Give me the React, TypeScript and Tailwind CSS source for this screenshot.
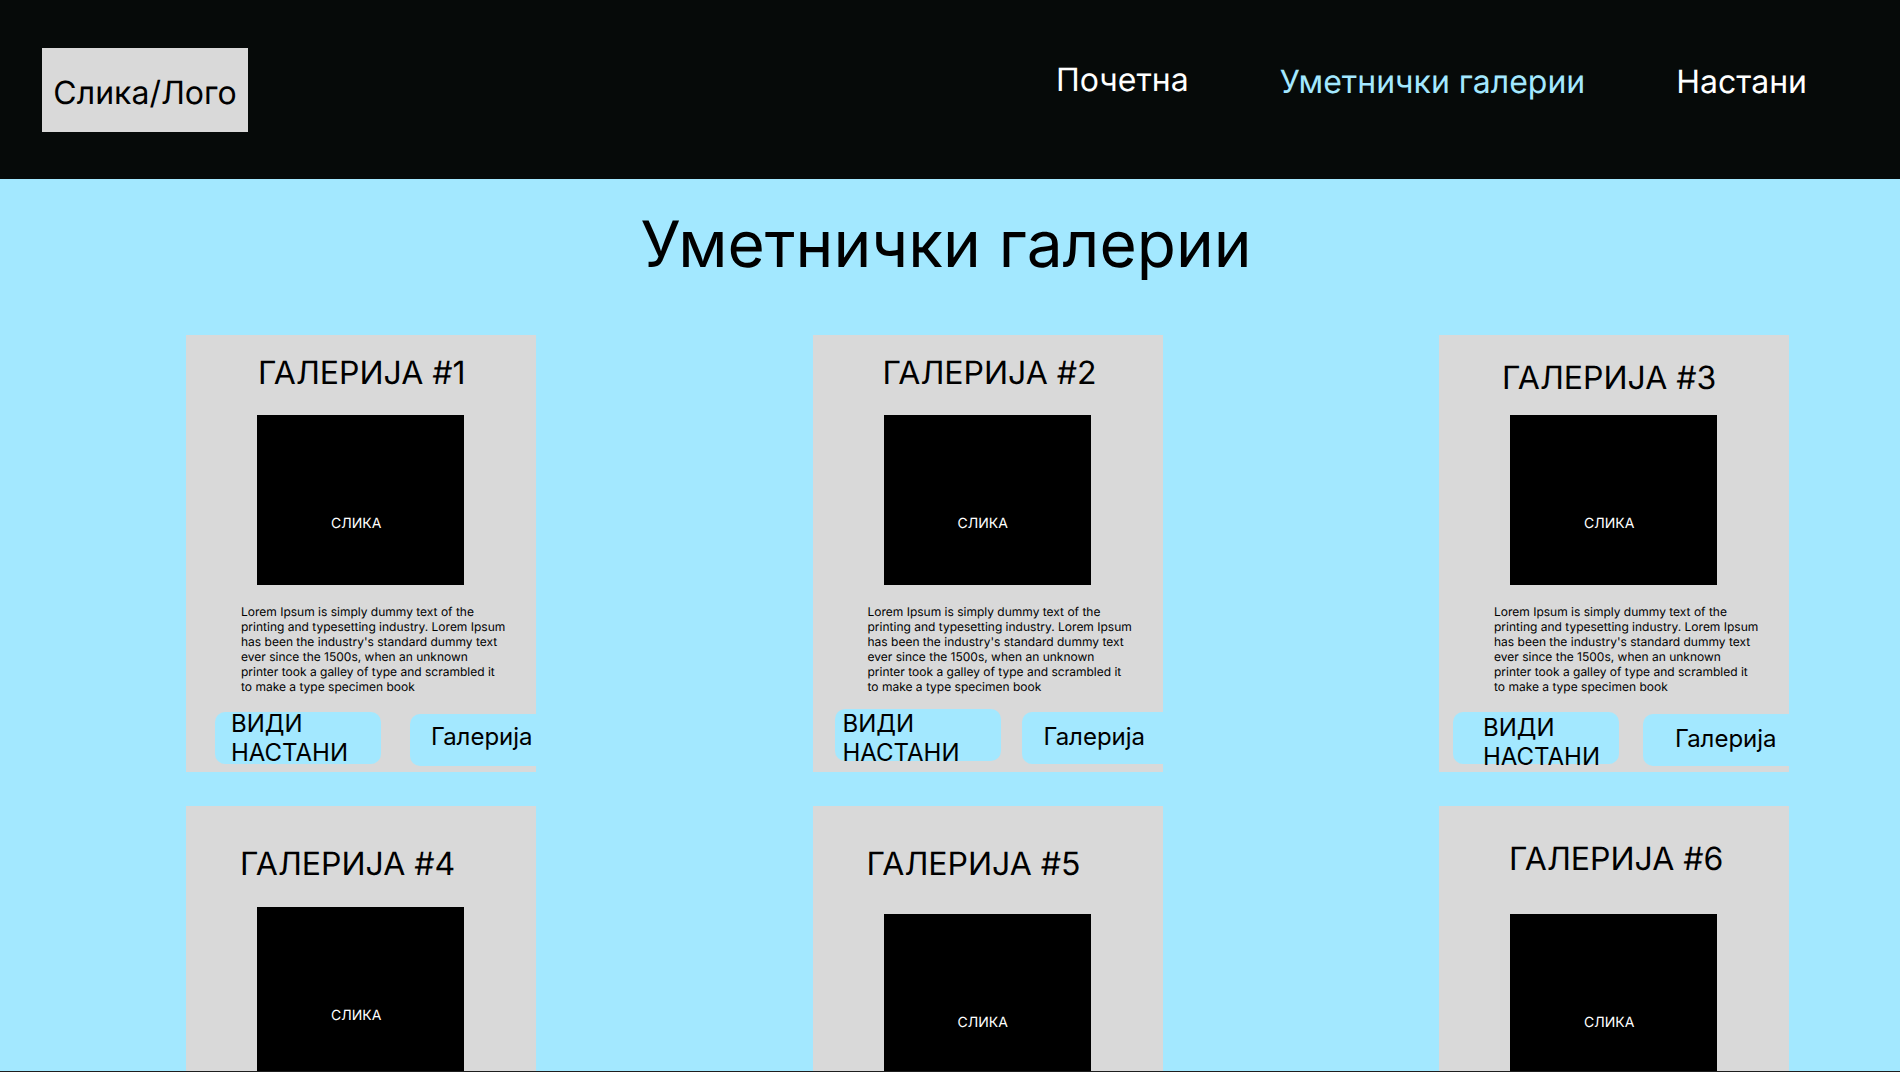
type Gallery = {
  id: number;
  title: string;
  details?: {
    row: string;
    events: string;
    open: string;
  };
};

const galleries: Gallery[] = [
  {
    id: 1,
    title: 'h-20 pl-[72px] pt-[18px]',
    details: {
      row: 'gap-[29px] pl-[29px] pt-[18px]',
      events: 'pl-4 -mt-[3px]',
      open: 'mt-0.5 pl-[21px] pt-2',
    },
  },
  {
    id: 2,
    title: 'h-20 pl-[70px] pt-[18px]',
    details: {
      row: 'gap-[21px] pl-[22px] pt-[15px]',
      events: 'pl-2',
      open: 'mt-[3px] pl-[22px] pt-2.5',
    },
  },
  {
    id: 3,
    title: 'h-20 pl-[63px] pt-[23px]',
    details: {
      row: 'gap-6 pl-3.5 pt-[18px]',
      events: 'pl-[30px] pt-px',
      open: 'mt-0.5 pl-8 pt-2.5',
    },
  },
  { id: 4, title: 'h-[101px] pl-[54px] pt-[38px]' },
  { id: 5, title: 'h-[108px] pl-[54px] pt-[38px]' },
  { id: 6, title: 'h-[108px] pl-[70px] pt-[33px]' },
];

const links = [
  { label: 'Почетна', style: 'text-white pb-0.5' },
  { label: 'Уметнички галерии', style: 'text-[#a3e8ff]' },
  { label: 'Настани', style: 'text-white' },
];

function GalleryCard({ gallery }: { gallery: Gallery }) {
  const { id, title, details } = gallery;
  return (
    <article className="min-h-[437px] w-[350px] overflow-x-clip bg-[#d9d9d9]">
      <h2 className={`text-[32px] leading-[39px] ${title}`}>ГАЛЕРИЈА #{id}</h2>
      <div className="ml-[71px] h-[170px] w-[207px] bg-black pl-[74px] pt-[100px] text-sm leading-[17px] text-white">
        СЛИКА
      </div>
      {details && (
        <>
          <p className="ml-[55px] mt-[19px] w-[266px] text-xs leading-[15px]">
            Lorem Ipsum is simply dummy text of the printing and typesetting industry. Lorem Ipsum
            has been the industry's standard dummy text ever since the 1500s, when an unknown
            printer took a galley of type and scrambled it to make a type specimen book
          </p>
          <div className={`flex items-start text-2xl leading-[29px] ${details.row}`}>
            <button
              type="button"
              className="flex h-[52px] w-[166px] shrink-0 items-start rounded-[10px] bg-[#a3e8ff] text-left"
            >
              <span className={details.events}>
                ВИДИ
                <br />
                НАСТАНИ
              </span>
            </button>
            <button
              type="button"
              className={`flex h-[52px] w-[166px] shrink-0 items-start rounded-[10px] bg-[#a3e8ff] text-left ${details.open}`}
            >
              Галерија
            </button>
          </div>
        </>
      )}
    </article>
  );
}

export default function App() {
  return (
    <div className="h-screen overflow-hidden border-b border-[#1e1e1e] bg-[#a3e8ff] font-['Inter',sans-serif] text-black [text-rendering:geometricPrecision]">
      <header className="flex h-[179px] items-start justify-between bg-[#060a09] pl-[42px] pr-[93px]">
        <a
          href="#"
          className="mt-12 flex h-[84px] w-[206px] justify-center bg-[#d9d9d9] pt-[25px] text-[32px] leading-[39px]"
        >
          Слика/Лого
        </a>
        <nav className="mt-[60px] flex items-end gap-[91px] text-[32px] leading-[39px]">
          {links.map((link) => (
            <a key={link.label} href="#" className={link.style}>
              {link.label}
            </a>
          ))}
        </nav>
      </header>
      <main>
        <h1 className="pr-2 pt-[27px] text-center text-[64px] leading-[77px]">Уметнички галерии</h1>
        <section className="mt-[52px] grid grid-cols-[repeat(3,350px)] justify-between gap-y-[34px] pl-[186px] pr-[111px]">
          {galleries.map((gallery) => (
            <GalleryCard key={gallery.id} gallery={gallery} />
          ))}
        </section>
      </main>
    </div>
  );
}
